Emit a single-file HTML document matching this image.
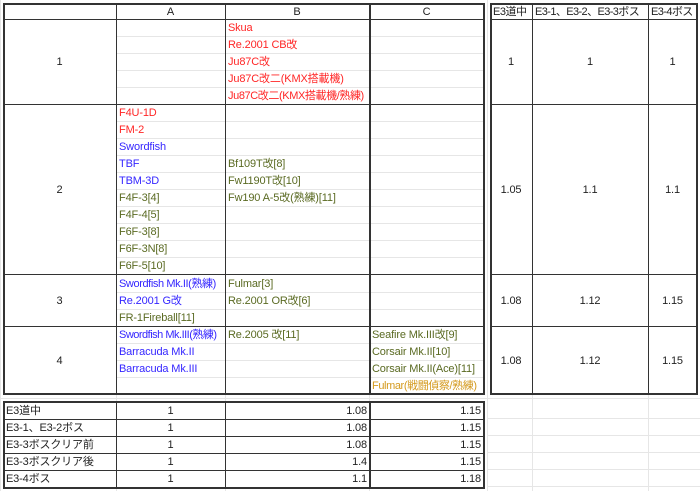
<!DOCTYPE html>
<html><head><meta charset="utf-8"><style>
body{margin:0;width:700px;height:491px;background:#fff;position:relative;overflow:hidden;font-family:"Liberation Sans","Noto Sans CJK JP",sans-serif;font-size:11px;color:#222}
.t{position:absolute;height:17px;line-height:19px;white-space:nowrap;letter-spacing:-0.15px}
.l{position:absolute;background:#e6e6e6}
.d{position:absolute;background:#333}
.r{color:#ff2626}.b{color:#3526ff}.o{color:#5a6a22}.y{color:#d49a1e}
.c{text-align:center}.rt{text-align:right}
</style></head><body>
<div class="l" style="left:0;top:0;width:1px;height:491px"></div>
<div class="l" style="left:487px;top:0;width:1px;height:491px"></div>
<div class="l" style="left:532px;top:395px;width:1px;height:96px"></div>
<div class="l" style="left:648px;top:395px;width:1px;height:96px"></div>
<div class="l" style="left:116px;top:395px;width:1px;height:96px"></div>
<div class="l" style="left:225px;top:395px;width:1px;height:96px"></div>
<div class="l" style="left:369px;top:395px;width:1px;height:96px"></div>
<div class="l" style="left:488px;top:418px;width:212px;height:1px"></div>
<div class="l" style="left:488px;top:435px;width:212px;height:1px"></div>
<div class="l" style="left:488px;top:452px;width:212px;height:1px"></div>
<div class="l" style="left:488px;top:469px;width:212px;height:1px"></div>
<div class="l" style="left:488px;top:486px;width:212px;height:1px"></div>
<div class="l" style="left:0;top:398px;width:700px;height:1px"></div>
<div class="l" style="left:117px;top:36px;width:367px;height:1px"></div>
<div class="l" style="left:117px;top:53px;width:367px;height:1px"></div>
<div class="l" style="left:117px;top:70px;width:367px;height:1px"></div>
<div class="l" style="left:117px;top:87px;width:367px;height:1px"></div>
<div class="l" style="left:117px;top:121px;width:367px;height:1px"></div>
<div class="l" style="left:117px;top:138px;width:367px;height:1px"></div>
<div class="l" style="left:117px;top:155px;width:367px;height:1px"></div>
<div class="l" style="left:117px;top:172px;width:367px;height:1px"></div>
<div class="l" style="left:117px;top:189px;width:367px;height:1px"></div>
<div class="l" style="left:117px;top:206px;width:367px;height:1px"></div>
<div class="l" style="left:117px;top:223px;width:367px;height:1px"></div>
<div class="l" style="left:117px;top:240px;width:367px;height:1px"></div>
<div class="l" style="left:117px;top:257px;width:367px;height:1px"></div>
<div class="l" style="left:117px;top:292px;width:367px;height:1px"></div>
<div class="l" style="left:117px;top:309px;width:367px;height:1px"></div>
<div class="l" style="left:117px;top:343px;width:367px;height:1px"></div>
<div class="l" style="left:117px;top:360px;width:367px;height:1px"></div>
<div class="l" style="left:117px;top:377px;width:367px;height:1px"></div>
<div class="d" style="left:3px;top:3px;width:482px;height:2px"></div>
<div class="d" style="left:3px;top:19px;width:482px;height:1px"></div>
<div class="d" style="left:3px;top:104px;width:482px;height:1px"></div>
<div class="d" style="left:3px;top:274px;width:482px;height:1px"></div>
<div class="d" style="left:3px;top:326px;width:482px;height:1px"></div>
<div class="d" style="left:3px;top:393px;width:482px;height:2px"></div>
<div class="d" style="left:3px;top:3px;width:2px;height:392px"></div>
<div class="d" style="left:116px;top:3px;width:1px;height:392px"></div>
<div class="d" style="left:225px;top:3px;width:1px;height:392px"></div>
<div class="d" style="left:369px;top:3px;width:2px;height:392px"></div>
<div class="d" style="left:483px;top:3px;width:2px;height:392px"></div>
<div class="d" style="left:490px;top:3px;width:208px;height:2px"></div>
<div class="d" style="left:490px;top:19px;width:208px;height:1px"></div>
<div class="d" style="left:490px;top:104px;width:208px;height:1px"></div>
<div class="d" style="left:490px;top:274px;width:208px;height:1px"></div>
<div class="d" style="left:490px;top:326px;width:208px;height:1px"></div>
<div class="d" style="left:490px;top:393px;width:208px;height:2px"></div>
<div class="d" style="left:490px;top:3px;width:2px;height:392px"></div>
<div class="d" style="left:532px;top:3px;width:1px;height:392px"></div>
<div class="d" style="left:648px;top:3px;width:1px;height:392px"></div>
<div class="d" style="left:696px;top:3px;width:2px;height:392px"></div>
<div class="d" style="left:3px;top:401px;width:482px;height:2px"></div>
<div class="d" style="left:3px;top:419px;width:482px;height:1px"></div>
<div class="d" style="left:3px;top:436px;width:482px;height:1px"></div>
<div class="d" style="left:3px;top:453px;width:482px;height:1px"></div>
<div class="d" style="left:3px;top:470px;width:482px;height:1px"></div>
<div class="d" style="left:3px;top:487px;width:482px;height:2px"></div>
<div class="d" style="left:3px;top:401px;width:2px;height:88px"></div>
<div class="d" style="left:116px;top:401px;width:1px;height:88px"></div>
<div class="d" style="left:225px;top:401px;width:1px;height:88px"></div>
<div class="d" style="left:369px;top:401px;width:2px;height:88px"></div>
<div class="d" style="left:483px;top:401px;width:2px;height:88px"></div>

<div class="t c" style="left:116px;top:3px;width:109px">A</div>
<div class="t c" style="left:225px;top:3px;width:144px">B</div>
<div class="t c" style="left:369px;top:3px;width:115px">C</div>
<div class="t" style="left:493px;top:3px;letter-spacing:-0.5px">E3道中</div>
<div class="t" style="left:535px;top:3px;letter-spacing:-0.6px">E3-1、E3-2、E3-3ボス</div>
<div class="t" style="left:651px;top:3px;letter-spacing:-0.6px">E3-4ボス</div>
<div class="t c" style="left:3px;top:53px;width:113px">1</div>
<div class="t c" style="left:3px;top:181px;width:113px">2</div>
<div class="t c" style="left:3px;top:292px;width:113px">3</div>
<div class="t c" style="left:3px;top:352px;width:113px">4</div>
<div class="t c" style="left:490px;top:53px;width:42px">1</div>
<div class="t c" style="left:532px;top:53px;width:116px">1</div>
<div class="t c" style="left:648px;top:53px;width:49px">1</div>
<div class="t c" style="left:490px;top:181px;width:42px">1.05</div>
<div class="t c" style="left:532px;top:181px;width:116px">1.1</div>
<div class="t c" style="left:648px;top:181px;width:49px">1.1</div>
<div class="t c" style="left:490px;top:292px;width:42px">1.08</div>
<div class="t c" style="left:532px;top:292px;width:116px">1.12</div>
<div class="t c" style="left:648px;top:292px;width:49px">1.15</div>
<div class="t c" style="left:490px;top:352px;width:42px">1.08</div>
<div class="t c" style="left:532px;top:352px;width:116px">1.12</div>
<div class="t c" style="left:648px;top:352px;width:49px">1.15</div>
<div class="t r" style="left:228px;top:19px">Skua</div>
<div class="t r" style="left:228px;top:36px">Re.2001 CB改</div>
<div class="t r" style="left:228px;top:53px">Ju87C改</div>
<div class="t r" style="left:228px;top:70px">Ju87C改二(KMX搭載機)</div>
<div class="t r" style="left:228px;top:87px;letter-spacing:-0.4px">Ju87C改二(KMX搭載機/熟練)</div>
<div class="t r" style="left:119px;top:104px">F4U-1D</div>
<div class="t r" style="left:119px;top:121px">FM-2</div>
<div class="t b" style="left:119px;top:138px">Swordfish</div>
<div class="t b" style="left:119px;top:155px">TBF</div>
<div class="t b" style="left:119px;top:172px">TBM-3D</div>
<div class="t o" style="left:119px;top:189px">F4F-3[4]</div>
<div class="t o" style="left:119px;top:206px">F4F-4[5]</div>
<div class="t o" style="left:119px;top:223px">F6F-3[8]</div>
<div class="t o" style="left:119px;top:240px">F6F-3N[8]</div>
<div class="t o" style="left:119px;top:257px">F6F-5[10]</div>
<div class="t o" style="left:228px;top:155px">Bf109T改[8]</div>
<div class="t o" style="left:228px;top:172px">Fw1190T改[10]</div>
<div class="t o" style="left:228px;top:189px">Fw190 A-5改(熟練)[11]</div>
<div class="t b" style="left:119px;top:275px;letter-spacing:-0.4px">Swordfish Mk.II(熟練)</div>
<div class="t b" style="left:119px;top:292px">Re.2001 G改</div>
<div class="t o" style="left:119px;top:309px">FR-1Fireball[11]</div>
<div class="t o" style="left:228px;top:275px">Fulmar[3]</div>
<div class="t o" style="left:228px;top:292px">Re.2001 OR改[6]</div>
<div class="t b" style="left:119px;top:326px;letter-spacing:-0.5px">Swordfish Mk.III(熟練)</div>
<div class="t b" style="left:119px;top:343px">Barracuda Mk.II</div>
<div class="t b" style="left:119px;top:360px">Barracuda Mk.III</div>
<div class="t o" style="left:228px;top:326px">Re.2005 改[11]</div>
<div class="t o" style="left:372px;top:326px">Seafire Mk.III改[9]</div>
<div class="t o" style="left:372px;top:343px">Corsair Mk.II[10]</div>
<div class="t o" style="left:372px;top:360px">Corsair Mk.II(Ace)[11]</div>
<div class="t y" style="left:372px;top:377px;letter-spacing:-0.4px">Fulmar(戦闘偵察/熟練)</div>
<div class="t" style="left:6px;top:402px">E3道中</div>
<div class="t" style="left:6px;top:419px">E3-1、E3-2ボス</div>
<div class="t" style="left:6px;top:436px">E3-3ボスクリア前</div>
<div class="t" style="left:6px;top:453px">E3-3ボスクリア後</div>
<div class="t" style="left:6px;top:470px">E3-4ボス</div>
<div class="t c" style="left:116px;top:402px;width:109px">1</div>
<div class="t c" style="left:116px;top:419px;width:109px">1</div>
<div class="t c" style="left:116px;top:436px;width:109px">1</div>
<div class="t c" style="left:116px;top:453px;width:109px">1</div>
<div class="t c" style="left:116px;top:470px;width:109px">1</div>
<div class="t rt" style="left:225px;top:402px;width:142px">1.08</div>
<div class="t rt" style="left:225px;top:419px;width:142px">1.08</div>
<div class="t rt" style="left:225px;top:436px;width:142px">1.08</div>
<div class="t rt" style="left:225px;top:453px;width:142px">1.4</div>
<div class="t rt" style="left:225px;top:470px;width:142px">1.1</div>
<div class="t rt" style="left:369px;top:402px;width:112px">1.15</div>
<div class="t rt" style="left:369px;top:419px;width:112px">1.15</div>
<div class="t rt" style="left:369px;top:436px;width:112px">1.15</div>
<div class="t rt" style="left:369px;top:453px;width:112px">1.15</div>
<div class="t rt" style="left:369px;top:470px;width:112px">1.18</div>
</body></html>
